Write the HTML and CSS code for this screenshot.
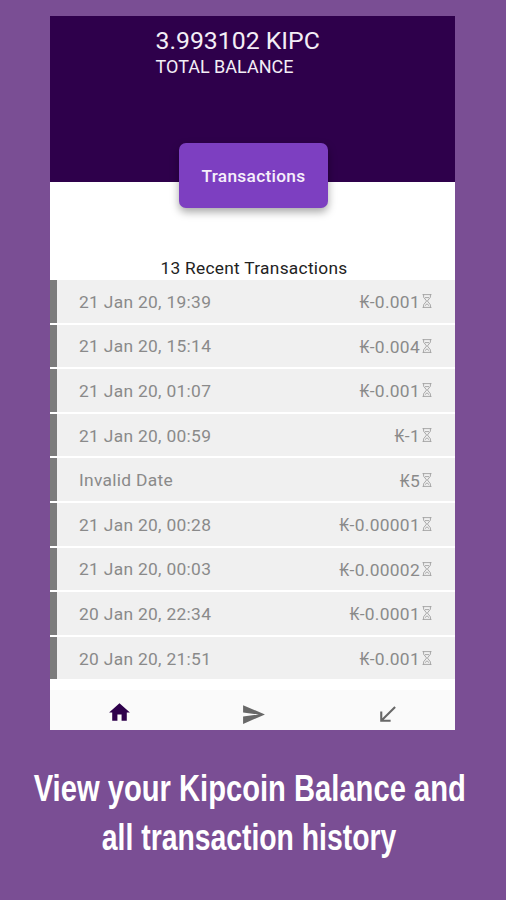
FILE: index.html
```
<!DOCTYPE html>
<html lang="en">
<head>
    <meta charset="UTF-8">
    <meta name="viewport" content="width=device-width, initial-scale=1.0">
    <title>Kipcoin Wallet</title>
    <link rel="stylesheet" href="styles.css">
</head>
<body>

    <svg class="defs" width="0" height="0">
        <symbol id="hourglass" viewBox="0 0 10 14">
            <path d="M0.5 0.6h9M0.5 13.4h9M1.6 0.6v2.6L4.6 7L1.6 10.8v2.6M8.4 0.6v2.6L5.4 7L8.4 10.8v2.6M3 3.6h4M3 11.6L5 9.8L7 11.6" fill="none" stroke="currentColor" stroke-width="0.7"/>
        </symbol>
    </svg>

    <main class="phone">
        <header class="balance">
            <div class="balance-text">
                <div class="amount">3.993102 KIPC</div>
                <div class="label">TOTAL BALANCE</div>
            </div>
        </header>

        <button type="button" class="tx-button"><span>Transactions</span></button>

        <h2 class="tx-title"><span>13 Recent Transactions</span></h2>

        <ul class="tx-list">
            <li><span class="date">21 Jan 20, 19:39</span><span class="value">₭-0.001</span><svg class="pending"><use href="#hourglass"/></svg></li>
            <li><span class="date">21 Jan 20, 15:14</span><span class="value">₭-0.004</span><svg class="pending"><use href="#hourglass"/></svg></li>
            <li><span class="date">21 Jan 20, 01:07</span><span class="value">₭-0.001</span><svg class="pending"><use href="#hourglass"/></svg></li>
            <li><span class="date">21 Jan 20, 00:59</span><span class="value">₭-1</span><svg class="pending"><use href="#hourglass"/></svg></li>
            <li><span class="date">Invalid Date</span><span class="value">₭5</span><svg class="pending"><use href="#hourglass"/></svg></li>
            <li><span class="date">21 Jan 20, 00:28</span><span class="value">₭-0.00001</span><svg class="pending"><use href="#hourglass"/></svg></li>
            <li><span class="date">21 Jan 20, 00:03</span><span class="value">₭-0.00002</span><svg class="pending"><use href="#hourglass"/></svg></li>
            <li><span class="date">20 Jan 20, 22:34</span><span class="value">₭-0.0001</span><svg class="pending"><use href="#hourglass"/></svg></li>
            <li><span class="date">20 Jan 20, 21:51</span><span class="value">₭-0.001</span><svg class="pending"><use href="#hourglass"/></svg></li>
        </ul>

        <nav class="tabs">
            <a class="tab active"><svg width="25" height="25" viewBox="0 0 24 24"><path d="M10 20v-6h4v6h5v-8h3L12 3 2 12h3v8z"/></svg></a>
            <a class="tab"><svg width="25" height="25" viewBox="0 0 24 24"><path d="M2.01 21L23 12 2.01 3 2 10l15 2-15 2z"/></svg></a>
            <a class="tab"><svg width="25" height="25" viewBox="0 0 24 24"><path d="M20 5.41L18.59 4 7 15.59V9H5v10h10v-2H8.41z"/></svg></a>
        </nav>
    </main>

    <div class="caption">
        <span class="line first">View your Kipcoin Balance and</span>
        <span class="line">all transaction history</span>
    </div>

</body>
</html>
```

FILE: styles.css
```
body {
    margin: 0;
    height: 900px;
    overflow: hidden;
    background-color: #7a4e94;
    font-family: Roboto, "Noto Sans", sans-serif;
}
.defs {
    display: block;
}
.phone {
    display: flex;
    flex-direction: column;
    width: 405px;
    height: 714px;
    margin: 16px 0 0 50px;
    background-color: white;
}
.balance {
    height: 166px;
    flex: none;
    background-color: #2e004b;
    color: #f3eef6;
}
.balance-text {
    padding: 10px 0 0 105.5px;
    white-space: nowrap;
}
.amount {
    font-size: 24.8px;
    line-height: 30px;
}
.label {
    font-size: 18px;
    line-height: 21px;
}
.tx-button {
    flex: none;
    width: 149px;
    height: 65px;
    margin: -39px 0 0 129px;
    padding: 0;
    border: none;
    border-radius: 7px;
    background-color: #7d3fc1;
    color: #f6effb;
    font: 500 17.3px/64px Roboto, sans-serif;
    letter-spacing: 0.3px;
    box-shadow: 0 4px 9px rgba(0, 0, 0, 0.35);
}
.tx-title {
    margin: 49px 0 0;
    height: 23px;
    font-size: 17.3px;
    font-weight: 400;
    line-height: 22px;
    text-align: center;
    text-indent: 3px;
    color: #222;
    letter-spacing: 0.3px;
}
.tx-list {
    display: flex;
    flex-direction: column;
    gap: 2px;
    margin: 0;
    padding: 0;
    list-style: none;
}
.tx-list li {
    display: flex;
    align-items: center;
    box-sizing: border-box;
    height: 42.6px;
    padding: 0 23px 0 22px;
    border-left: 7px solid #7c7c7c;
    background-color: #f0f0f0;
    color: #8a8a8a;
    font-size: 17.4px;
    letter-spacing: 0.3px;
}
.date {
    flex: 1;
    padding-top: 1px;
}
.pending {
    width: 10px;
    height: 14px;
    margin-left: 2px;
}
.tabs {
    display: grid;
    grid-template-columns: repeat(3, 1fr);
    height: 40px;
    margin-top: auto;
    padding-left: 2px;
    background-color: #fafafa;
}
.tab {
    display: flex;
    justify-content: center;
    padding-top: 12px;
    color: #686868;
}
.tab.active {
    padding-top: 10px;
    color: #2e004b;
}
.tab svg {
    fill: currentColor;
}
.caption {
    display: flex;
    flex-direction: column;
    align-items: center;
    width: 499px;
    margin-top: 34px;
    color: white;
    font-family: "Liberation Sans", Arial, sans-serif;
    font-size: 36px;
    font-weight: 700;
    line-height: 49px;
    white-space: nowrap;
}
/* condensed heading face */
.line {
    transform: scaleX(0.787);
}
.line.first {
    transform: scaleX(0.81);
}
```
